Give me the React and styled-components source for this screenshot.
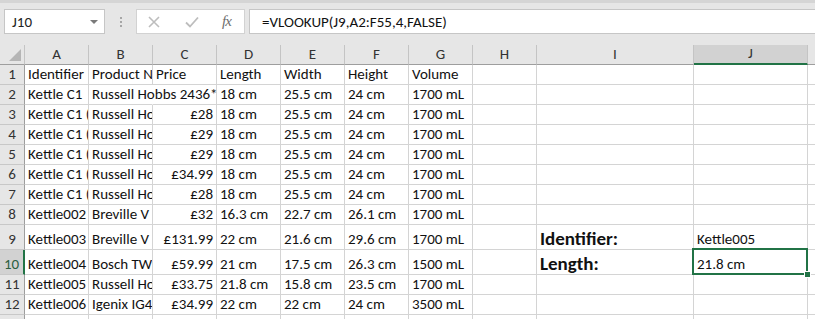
import React from 'react';
import styled, { createGlobalStyle } from 'styled-components';

const GREEN = '#217346';
const CELL_FONT = "'Carlito', 'Lato', sans-serif";

const Global = createGlobalStyle`
  html, body {
    margin: 0;
    padding: 0;
    background: #fff;
    overflow: hidden;
  }
  body {
    font-family: ${CELL_FONT};
  }
`;

const Window = styled.div`
  width: 815px;
  height: 319px;
  overflow: hidden;
  background: #fff;
`;

const FormulaBar = styled.div`
  box-sizing: border-box;
  height: 45px;
  display: flex;
  align-items: flex-start;
  padding: 6px 0 0 4px;
  background: #e6e6e6;
  border-top: 3px solid #d5d5d5;
`;

const NameBox = styled.div`
  box-sizing: border-box;
  width: 101px;
  height: 25px;
  display: flex;
  align-items: center;
  justify-content: space-between;
  padding: 0 6px 0 7px;
  background: #fff;
  border: 1px solid #c6c6c6;
  font-size: 15px;
  color: #222;
`;

const DropArrow = styled.span`
  width: 0;
  height: 0;
  border-left: 4px solid transparent;
  border-right: 4px solid transparent;
  border-top: 4px solid #7a7a7a;
`;

const Grip = styled.div`
  width: 31px;
  height: 25px;
  display: flex;
  flex-direction: column;
  align-items: center;
  justify-content: center;
  gap: 2px;

  span {
    width: 2px;
    height: 2px;
    background: #a6a6a6;
  }
`;

const ButtonBox = styled.div`
  box-sizing: border-box;
  width: 109px;
  height: 25px;
  display: flex;
  align-items: center;
  padding: 0 0 0 11px;
  background: #fff;
  border: 1px solid #d2d2d2;
`;

const IconSlot = styled.div`
  width: ${p => p.$w}px;
  display: flex;
  align-items: center;
  justify-content: flex-start;
`;

const Fx = styled.span`
  font-family: 'Liberation Serif', serif;
  font-style: italic;
  font-size: 15px;
  color: #6e6e6e;
  letter-spacing: -1px;
`;

const FormulaInput = styled.div`
  box-sizing: border-box;
  flex: 1;
  height: 25px;
  margin-left: 4px;
  display: flex;
  align-items: center;
  padding-left: 12px;
  background: #fff;
  border: 1px solid #c6c6c6;
  border-right: none;
  font-size: 15px;
  color: #111;
`;

const Sheet = styled.div`
  display: grid;
  grid-template-columns: 25px repeat(8, 64px) 157px 114px 64px;
  grid-template-rows: 20px repeat(8, 20px) 25px 25px repeat(4, 20px);
  font-size: 15px;
  color: #111;
`;

const ColHead = styled.div`
  box-sizing: border-box;
  display: flex;
  align-items: flex-end;
  justify-content: center;
  padding-bottom: 1px;
  line-height: 18px;
  background: ${p => (p.$active ? '#d2d2d2' : '#e6e6e6')};
  border-right: 1px solid #c4c4c4;
  border-bottom: ${p => (p.$active ? `2px solid ${GREEN}` : '1px solid #9e9e9e')};
  color: #333;
`;

const Corner = styled.div`
  box-sizing: border-box;
  display: flex;
  align-items: flex-end;
  justify-content: flex-end;
  padding: 0 3px 3px 0;
  background: #e6e6e6;
  border-right: 1px solid #c4c4c4;
  border-bottom: 1px solid #9e9e9e;

  span {
    width: 0;
    height: 0;
    border-left: 12px solid transparent;
    border-bottom: 12px solid #b5b5b5;
  }
`;

const RowHead = styled.div`
  box-sizing: border-box;
  display: flex;
  align-items: flex-end;
  justify-content: center;
  padding-bottom: 1px;
  line-height: 18px;
  background: ${p => (p.$active ? '#d2d2d2' : '#e6e6e6')};
  border-right: ${p => (p.$active ? `2px solid ${GREEN}` : '1px solid #9e9e9e')};
  border-bottom: 1px solid #c8c8c8;
  color: ${p => (p.$active ? '#2b5f41' : '#333')};
`;

const Cell = styled.div`
  box-sizing: border-box;
  position: relative;
  display: flex;
  align-items: flex-end;
  justify-content: ${p => (p.$right ? 'flex-end' : 'flex-start')};
  padding: 0 3px 1px 3px;
  line-height: 18px;
  white-space: nowrap;
  overflow: ${p => (p.$spill ? 'visible' : 'hidden')};
  z-index: ${p => (p.$spill ? 1 : 'auto')};
  border-right: 1px solid ${p => (p.$spill ? 'transparent' : '#d4d4d4')};
  border-bottom: 1px solid #d4d4d4;
  font-weight: ${p => (p.$label ? 700 : 400)};
  font-size: ${p => (p.$label ? '19px' : '15px')};

  ${p =>
    p.$selected &&
    `
    overflow: visible;
    &::after {
      content: '';
      position: absolute;
      top: -2px;
      left: -2px;
      right: -1px;
      bottom: -1px;
      border: 2px solid ${GREEN};
      pointer-events: none;
    }
    &::before {
      content: '';
      position: absolute;
      right: -4px;
      bottom: -4px;
      width: 5px;
      height: 5px;
      background: ${GREEN};
      border: 1px solid #fff;
      z-index: 2;
    }
  `}
`;

const columns = ['A', 'B', 'C', 'D', 'E', 'F', 'G', 'H', 'I', 'J', 'K'];

// cells narrower than their text: only what the column shows is kept
const kettleC1 = (price) => [
  'Kettle C1 (', 'Russell Ho', price, '18 cm', '25.5 cm', '24 cm', '1700 mL',
];

const rows = [
  ['Identifier', 'Product N', 'Price', 'Length', 'Width', 'Height', 'Volume'],
  ['Kettle C1', 'Russell Hobbs 2436*', '', '18 cm', '25.5 cm', '24 cm', '1700 mL'],
  kettleC1('£28'),
  kettleC1('£29'),
  kettleC1('£29'),
  kettleC1('£34.99'),
  kettleC1('£28'),
  ['Kettle002', 'Breville V', '£32', '16.3 cm', '22.7 cm', '26.1 cm', '1700 mL'],
  ['Kettle003', 'Breville V', '£131.99', '22 cm', '21.6 cm', '29.6 cm', '1700 mL', '', 'Identifier:', 'Kettle005'],
  ['Kettle004', 'Bosch TWI', '£59.99', '21 cm', '17.5 cm', '26.3 cm', '1500 mL', '', 'Length:', '21.8 cm'],
  ['Kettle005', 'Russell Ho', '£33.75', '21.8 cm', '15.8 cm', '23.5 cm', '1700 mL'],
  ['Kettle006', 'Igenix IG4', '£34.99', '22 cm', '22 cm', '24 cm', '3500 mL'],
  [],
  [],
];

const CancelIcon = () => (
  <svg width="12" height="12" viewBox="0 0 12 12">
    <path d="M1 1 L11 11 M11 1 L1 11" stroke="#bdbdbd" strokeWidth="1.6" fill="none" />
  </svg>
);

const EnterIcon = () => (
  <svg width="14" height="12" viewBox="0 0 14 12">
    <path d="M1 6.5 L5 10.5 L13 1.5" stroke="#bdbdbd" strokeWidth="1.8" fill="none" />
  </svg>
);

function renderCell(value, rowIndex, colIndex) {
  const rowNo = rowIndex + 1;
  const col = columns[colIndex];
  const isPrice = col === 'C' && rowNo > 1;
  return (
    <Cell
      key={col + rowNo}
      $right={isPrice}
      $spill={rowNo === 2 && col === 'B'}
      $label={col === 'I' && (rowNo === 9 || rowNo === 10)}
      $selected={col === 'J' && rowNo === 10}
    >
      {value}
    </Cell>
  );
}

export default function App() {
  return (
    <Window>
      <Global />
      <FormulaBar>
        <NameBox>
          <span>J10</span>
          <DropArrow />
        </NameBox>
        <Grip>
          <span />
          <span />
          <span />
        </Grip>
        <ButtonBox>
          <IconSlot $w={37}><CancelIcon /></IconSlot>
          <IconSlot $w={37}><EnterIcon /></IconSlot>
          <IconSlot $w={20}><Fx>fx</Fx></IconSlot>
        </ButtonBox>
        <FormulaInput>=VLOOKUP(J9,A2:F55,4,FALSE)</FormulaInput>
      </FormulaBar>

      <Sheet>
        <Corner><span /></Corner>
        {columns.map(c => (
          <ColHead key={c} $active={c === 'J'}>{c}</ColHead>
        ))}
        {rows.map((row, r) => (
          <React.Fragment key={r}>
            <RowHead $active={r + 1 === 10}>{r + 1}</RowHead>
            {columns.map((_, c) => renderCell(row[c] || '', r, c))}
          </React.Fragment>
        ))}
      </Sheet>
    </Window>
  );
}
